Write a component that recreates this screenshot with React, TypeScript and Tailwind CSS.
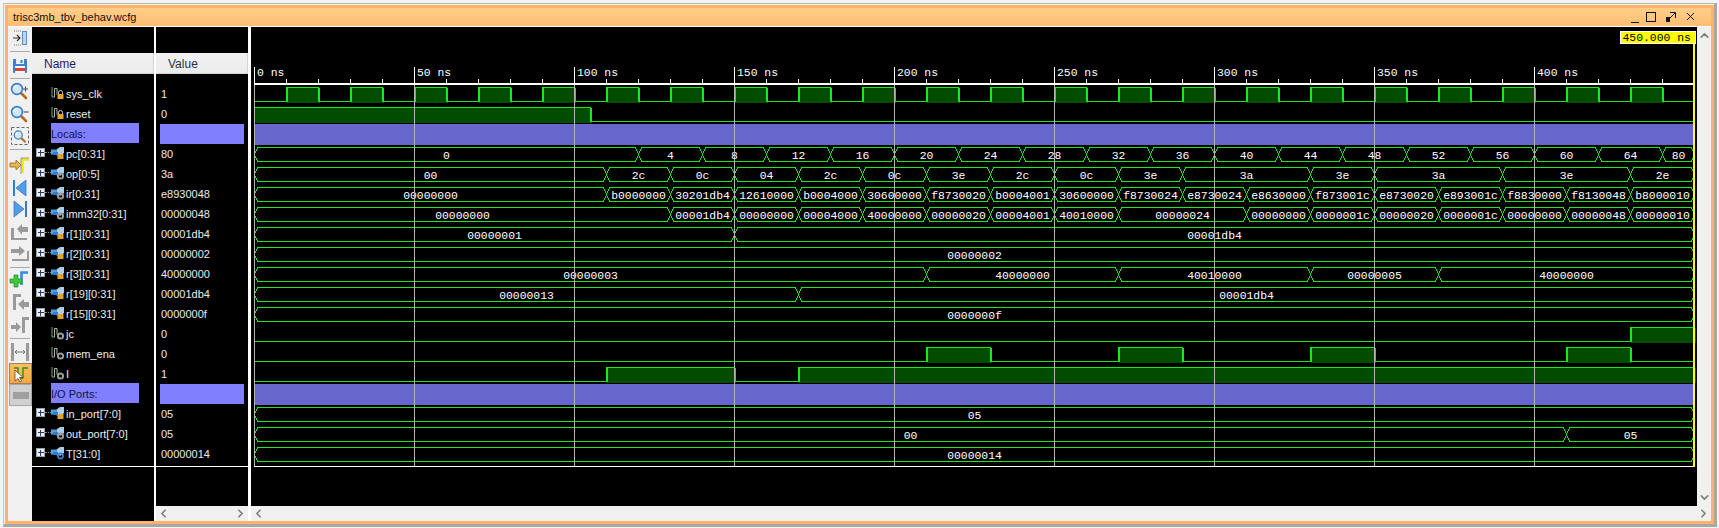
import React from "react";
import { ChevronLeft, ChevronRight, ChevronUp, ChevronDown } from "lucide-react";

const X = (t: number) => Math.floor(254.7 + 3.2 * t) + 0.5;
const G = "#1ce61c";
const DARK = "#004d00";
const MONO = '"Liberation Mono", monospace';

type Seg = [number, string];
const bus = (vals: Seg[]) => vals;

const pcs = [0,4,8,12,16,20,24,28,32,36,40,44,48,52,56,60,64];
const pcSegs: Seg[] = [[120,"0"],...pcs.slice(1).map((v,i):Seg=>[140+i*20,String(v)]),[450,"80"]];

const rowsW: Record<number, Seg[]> = {
  3: pcSegs,
  4: bus([[110,"00"],[130,"2c"],[150,"0c"],[170,"04"],[190,"2c"],[210,"0c"],[230,"3e"],[250,"2c"],[270,"0c"],[290,"3e"],[330,"3a"],[350,"3e"],[390,"3a"],[430,"3e"],[450,"2e"]]),
  5: bus([[110,"00000000"],[130,"b0000000"],[150,"30201db4"],[170,"12610000"],[190,"b0004000"],[210,"30600000"],[230,"f8730020"],[250,"b0004001"],[270,"30600000"],[290,"f8730024"],[310,"e8730024"],[330,"e8630000"],[350,"f873001c"],[370,"e8730020"],[390,"e893001c"],[410,"f8830000"],[430,"f8130048"],[450,"b8000010"]]),
  6: bus([[130,"00000000"],[150,"00001db4"],[170,"00000000"],[190,"00004000"],[210,"40000000"],[230,"00000020"],[250,"00004001"],[270,"40010000"],[310,"00000024"],[330,"00000000"],[350,"0000001c"],[370,"00000020"],[390,"0000001c"],[410,"00000000"],[430,"00000048"],[450,"00000010"]]),
  7: bus([[150,"00000001"],[450,"00001db4"]]),
  8: bus([[450,"00000002"]]),
  9: bus([[210,"00000003"],[270,"40000000"],[330,"40010000"],[370,"00000005"],[450,"40000000"]]),
  10: bus([[170,"00000013"],[450,"00001db4"]]),
  11: bus([[450,"0000000f"]]),
  16: bus([[450,"05"]]),
  17: bus([[410,"00"],[450,"05"]]),
  18: bus([[450,"00000014"]]),
};

const clockHighs: [number, number][] = Array.from({ length: 22 }, (_, i) => [10 + i * 20, 20 + i * 20] as [number, number]);
const digital: Record<number, [number, number][]> = {
  0: clockHighs,
  1: [[0, 105]],
  12: [[430, 450]],
  13: [[210, 230], [270, 290], [330, 350], [410, 430]],
  14: [[110, 150], [170, 450]],
};

function Digital({ k, highs }: { k: number; highs: [number, number][] }) {
  const top = 87.5 + 20 * k;
  const low = top + 14;
  const startHigh = highs[0][0] === 0;
  let d = `M${X(0)} ${startHigh ? top : low}`;
  highs.forEach(([a, b]) => {
    const xa = X(a);
    const xb = X(b);
    if (a !== 0) d += `L${xa} ${low}L${xa} ${top}`;
    d += `L${xb} ${top}`;
    if (b !== 450) d += `L${xb} ${low}`;
  });
  if (highs[highs.length - 1][1] !== 450) d += `L${X(450)} ${low}`;
  return (
    <g>
      {highs.map(([a, b], i) => (
        <rect key={i} x={X(a)} y={top} width={X(b) - X(a) + 1} height={15.5} fill={DARK} />
      ))}
      <path d={d} fill="none" stroke={G} strokeWidth={1} />
      {highs.flatMap(([a, b]) => [a, b]).filter((t) => t !== 0 && t !== 450).map((t) => (
        <rect key={t} x={X(t) - 0.5} y={top} width={2} height={14.5} fill={G} />
      ))}
    </g>
  );
}

function Bus({ k, segs }: { k: number; segs: Seg[] }) {
  const top = 147.5 + 20 * (k - 3);
  const bot = top + 14;
  const mid = top + 7;
  let start = 0;
  return (
    <g>
      {segs.map(([end, label], i) => {
        const a = X(start);
        const b = X(end);
        const cx = (a + b) / 2;
        start = end;
        const d = `M${a} ${mid}L${a + 3} ${top}L${b - 3} ${top}L${b} ${mid}L${b - 3} ${bot}L${a + 3} ${bot}Z`;
        return (
          <g key={i}>
            <path d={d} fill="none" stroke={G} strokeWidth={1} />
            <text x={cx} y={top + 11} textAnchor="middle" fill="#ffffff" fontSize={11.4} fontFamily={MONO} shapeRendering="auto">
              {label}
            </text>
          </g>
        );
      })}
    </g>
  );
}

function Waves() {
  const ticks = Array.from({ length: 45 }, (_, i) => i * 10);
  return (
    <svg width={1446} height={440} viewBox="251 27 1446 440" shapeRendering="crispEdges" className="block">
      {[2, 15].map((k) => (
        <rect key={k} x={255} y={84 + 20 * k} width={1439} height={21} fill="#6666cc" />
      ))}
      {Object.entries(digital).map(([k, v]) => (
        <Digital key={k} k={Number(k)} highs={v} />
      ))}
      {Object.entries(rowsW).map(([k, v]) => (
        <Bus key={k} k={Number(k)} segs={v} />
      ))}
      <rect x={254} y={83} width={1440} height={1.5} fill="#ffffff" />
      {ticks.map((t) => {
        const major = t % 50 === 0;
        return <rect key={t} x={X(t) - 0.5} y={major ? 67 : 79} width={1} height={major ? 16 : 4} fill="#ffffff" />;
      })}
      {ticks.filter((t) => t % 50 === 0).map((t) => (
        <text key={t} x={X(t) + 2.5} y={76} fill="#ffffff" fontSize={11.4} fontFamily={MONO} shapeRendering="auto">
          {t} ns
        </text>
      ))}
      {ticks.filter((t) => t % 50 === 0).map((t) => (
        <rect key={t} x={X(t) - 0.5} y={85} width={1} height={381} fill="#b4b4b4" />
      ))}
      <rect x={254} y={466} width={1441} height={1} fill="#ffffff" />
      <rect x={1693} y={43} width={2} height={424} fill="#ffff00" />
      <rect x={1620} y={31} width={75} height={12} fill="#ffff00" stroke="#ffffff" strokeWidth={1} />
      <text x={1622.5} y={40.5} fill="#000000" fontSize={11.4} fontFamily={MONO} shapeRendering="auto">
        450.000 ns
      </text>
    </svg>
  );
}

type RowDef =
  | { name: string; value: string; type: "scalar" | "bus"; badge: "lock" | "gear" | "ring" }
  | { name: string; divider: true };

const rows: RowDef[] = [
  { name: "sys_clk", value: "1", type: "scalar", badge: "lock" },
  { name: "reset", value: "0", type: "scalar", badge: "lock" },
  { name: "Locals:", divider: true },
  { name: "pc[0:31]", value: "80", type: "bus", badge: "lock" },
  { name: "op[0:5]", value: "3a", type: "bus", badge: "gear" },
  { name: "ir[0:31]", value: "e8930048", type: "bus", badge: "gear" },
  { name: "imm32[0:31]", value: "00000048", type: "bus", badge: "gear" },
  { name: "r[1][0:31]", value: "00001db4", type: "bus", badge: "lock" },
  { name: "r[2][0:31]", value: "00000002", type: "bus", badge: "lock" },
  { name: "r[3][0:31]", value: "40000000", type: "bus", badge: "lock" },
  { name: "r[19][0:31]", value: "00001db4", type: "bus", badge: "lock" },
  { name: "r[15][0:31]", value: "0000000f", type: "bus", badge: "lock" },
  { name: "jc", value: "0", type: "scalar", badge: "gear" },
  { name: "mem_ena", value: "0", type: "scalar", badge: "gear" },
  { name: "I", value: "1", type: "scalar", badge: "gear" },
  { name: "I/O Ports:", divider: true },
  { name: "in_port[7:0]", value: "05", type: "bus", badge: "lock" },
  { name: "out_port[7:0]", value: "05", type: "bus", badge: "gear" },
  { name: "T[31:0]", value: "00000014", type: "bus", badge: "ring" },
];

function SigIcon({ type, badge }: { type: "scalar" | "bus"; badge: "lock" | "gear" | "ring" }) {
  return (
    <svg width={14} height={14} viewBox="0 0 14 14" className="shrink-0">
      {type === "scalar" ? (
        <g fill="none" strokeWidth={1}>
          <path d="M1 1v10h2.5" stroke="#7fa87f" />
          <path d="M3.5 11V2.5H6v6" stroke="#a8b8a8" />
        </g>
      ) : (
        <g>
          <path d="M0 3.5h5.5v5H0z" fill="#4f9fe0" />
          <path d="M5.5 3.5L9 1h4v6l-3 2.5H5.5z" fill="#a8cdea" />
          <rect x={2} y={6} width={5} height={3} fill="#2f7fc8" />
        </g>
      )}
      {badge === "lock" && (
        <g>
          <path d="M7.5 8V6.5a2 2 0 0 1 4 0V8" fill="none" stroke="#cfcfcf" strokeWidth={1} />
          <rect x={6.5} y={8} width={6} height={5} fill="#e0a52a" />
        </g>
      )}
      {badge === "gear" && <circle cx={9.5} cy={10} r={2.6} fill="none" stroke="#9a9a9a" strokeWidth={2} />}
      {badge === "ring" && <circle cx={9.5} cy={10} r={2.6} fill="none" stroke="#3f7fd0" strokeWidth={1.6} />}
    </svg>
  );
}

function NameRow({ row }: { row: RowDef }) {
  if ("divider" in row) {
    return (
      <div className="h-[20px] pl-[19px]">
        <div className="flex h-[20px] w-[88px] items-center bg-[#8080ff] text-[#10104a]">
          <span className="mt-[2px]">{row.name}</span>
        </div>
      </div>
    );
  }
  return (
    <div className="relative flex h-[20px] items-center pl-[19px]">
      {row.type === "bus" && (
        <>
          <div className="absolute left-[4px] top-[5px] flex h-[9px] w-[9px] items-center justify-center border border-[#a0a0a0] bg-[#f0f0f0]">
            <svg width={7} height={7} viewBox="0 0 7 7" shapeRendering="crispEdges">
              <path d="M0.5 3.5h6M3.5 0.5v6" stroke="#1c3a8a" strokeWidth={1} />
            </svg>
          </div>
          <div className="absolute left-[13px] top-[9px] w-[6px] border-t border-dotted border-[#909090]" />
        </>
      )}
      <SigIcon type={row.type} badge={row.badge} />
      <span className="ml-[1px] mt-[2px] whitespace-nowrap text-[#ececec]">{row.name}</span>
    </div>
  );
}

function ValueRow({ row }: { row: RowDef }) {
  if ("divider" in row) {
    return (
      <div className="h-[20px] pl-[4px] pt-[1px]">
        <div className="h-[20px] w-[84px] bg-[#8080ff]" />
      </div>
    );
  }
  return (
    <div className="flex h-[20px] items-center pl-[5px] text-[#ececec]">
      <span className="mt-[2px]">{row.value}</span>
    </div>
  );
}

const Sep = ({ cls }: { cls: string }) => <div className={`h-[1px] w-[20px] shrink-0 bg-[#a8a8a8] ${cls}`} />;

const Ic = ({ cls, children }: { cls: string; children: React.ReactNode }) => (
  <svg width={24} height={20} viewBox="0 0 24 20" className={`block shrink-0 ${cls}`}>
    {children}
  </svg>
);

const Mag = ({ sign }: { sign?: "+" | "-" }) => (
  <g>
    <path d="M13 12l5 5" stroke="#b8691c" strokeWidth={2.6} strokeLinecap="round" />
    <circle cx={9} cy={8} r={5.4} fill="#cfe6fb" stroke="#3f7fc0" strokeWidth={1.6} />
    <path d="M6 8a3 3 0 0 1 3-3" fill="none" stroke="#ffffff" strokeWidth={1.2} />
    {sign === "+" && <path d="M15 8h5M17.5 5.5v5" stroke="#555" strokeWidth={1.2} />}
    {sign === "-" && <path d="M15.5 8h5" stroke="#555" strokeWidth={1.2} />}
  </g>
);

const GrayFill = "#9a9a9a";

function Toolbar() {
  return (
    <div className="flex h-full w-[24px] shrink-0 flex-col items-center bg-[#f0f0f0]">
      <Ic cls="mt-[1px]">
        <path d="M6 3h8M6 17h8" stroke="#777" strokeWidth={1} strokeDasharray="1 1" />
        <path d="M5 10h7M9 7l3 3-3 3" fill="none" stroke="#333" strokeWidth={1.2} />
        <rect x={14.5} y={3.5} width={4} height={13} fill="#b8d6f2" stroke="#5b8fc4" />
      </Ic>
      <Sep cls="mt-[3px]" />
      <Ic cls="mt-[4px]">
        <rect x={5} y={3} width={14} height={14} rx={1} fill="#3f7fd0" />
        <rect x={8} y={3} width={8} height={5} fill="#e8f0fa" />
        <rect x={12.5} y={4} width={2} height={3} fill="#3f7fd0" />
        <rect x={7} y={10} width={10} height={7} fill="#f4f4f4" />
        <rect x={7} y={12} width={10} height={3} fill="#d8403a" />
      </Ic>
      <Sep cls="mt-[2px]" />
      <Ic cls="mt-[2px]"><Mag sign="+" /></Ic>
      <Ic cls="mt-[3px]"><Mag sign="-" /></Ic>
      <Ic cls="mt-[2px]">
        <rect x={3.5} y={1.5} width={17} height={17} fill="none" stroke="#666" strokeDasharray="3 2" />
        <g transform="translate(3.5 3) scale(0.75)"><Mag /></g>
      </Ic>
      <Sep cls="mt-[3px]" />
      <Ic cls="mt-[6px]">
        <path d="M2 7h6V4l5 5-5 5v-3H2z" fill="#e8b84a" stroke="#8a6a20" strokeWidth={0.8} />
        <path d="M14.5 17V3.5H21" fill="none" stroke="#f4e400" strokeWidth={2.4} />
        <path d="M13 18V2h8" fill="none" stroke="#777" strokeWidth={0.7} />
      </Ic>
      <Ic cls="mt-[2px]">
        <rect x={5} y={2} width={2} height={16} fill="#2f7fd0" />
        <path d="M8 10l10-8v16z" fill="#4f9fe6" stroke="#2f6fb8" strokeWidth={0.7} />
      </Ic>
      <Ic cls="mt-[1px]">
        <rect x={17} y={2} width={2} height={16} fill="#2f7fd0" />
        <path d="M16 10L6 2v16z" fill="#4f9fe6" stroke="#2f6fb8" strokeWidth={0.7} />
      </Ic>
      <Ic cls="mt-[3px]">
        <path d="M3 6h3v10h13v2H3z" fill={GrayFill} />
        <path d="M9 7l5-5v3h6v5h-6v3z" fill={GrayFill} />
      </Ic>
      <Ic cls="mt-[1px]">
        <path d="M3 6h8V3l6 5-6 5v-3H3z" fill={GrayFill} />
        <path d="M19 8h2v10H4v-2h15z" fill={GrayFill} />
      </Ic>
      <Sep cls="mt-[4px]" />
      <Ic cls="mt-[1px]">
        <path d="M13.5 16V3.5H20" fill="none" stroke="#2f8fe0" strokeWidth={2.6} />
        <path d="M6 6h4v4h4v4h-4v4H6v-4H2v-4h4z" fill="#3cc83c" stroke="#1f8a1f" strokeWidth={0.7} />
      </Ic>
      <Ic cls="mt-[3px]">
        <path d="M5 2h8v3H8v13H5z" fill={GrayFill} />
        <path d="M10 12l6-5v3h5v5h-5v3z" fill={GrayFill} />
      </Ic>
      <Ic cls="mt-[3px]">
        <path d="M14 2h7v3h-4v13h-3z" fill={GrayFill} />
        <path d="M3 10h5V7l5 5-5 5v-3H3z" fill={GrayFill} />
      </Ic>
      <Sep cls="mt-[3px]" />
      <Ic cls="mt-[3px]">
        <rect x={3} y={1} width={3} height={18} fill={GrayFill} />
        <rect x={18} y={1} width={3} height={18} fill={GrayFill} />
        <path d="M7 10h10M9 8l-2 2 2 2M15 8l2 2-2 2" fill="none" stroke="#777" strokeWidth={1} />
      </Ic>
      <div className="mt-[1px] ml-[1px] flex h-[21px] w-[23px] shrink-0 items-center justify-center border border-[#a08060] bg-gradient-to-b from-[#ffc05e] to-[#ffa63e]">
        <svg width={20} height={18} viewBox="0 0 20 18">
          <path d="M3 3h4v10h5V3h5" fill="none" stroke="#2e8a2e" strokeWidth={1.4} />
          <path d="M4 5v11l3-2.5 2 3.5 1.5-1-2-3.5h3.5z" fill="#ffffff" stroke="#333" strokeWidth={0.7} />
        </svg>
      </div>
      <div className="ml-[1px] flex h-[22px] w-[23px] shrink-0 items-center justify-center border border-[#a8a8a8] bg-[#d0d0d0]">
        <div className="h-[7px] w-[16px] bg-[#a0a0a0]" />
      </div>
    </div>
  );
}

function Header({ label, cls }: { label: string; cls: string }) {
  return (
    <div className={`flex h-[21px] items-center border-b border-r border-[#d4d4d4] bg-gradient-to-b from-[#f2f2f2] to-[#ebebeb] pt-[2px] text-[12px] ${cls}`}>
      {label}
    </div>
  );
}

export default function App() {
  return (
    <div
      className="h-[528px] w-[1719px] overflow-hidden bg-[#f4f4f4] pl-[3px] pt-[3px] text-[11px]"
      style={{ fontFamily: '"Liberation Sans", sans-serif' }}
    >
      <div className="h-[524px] w-[1714px] border-b-[3px] border-l border-r-[3px] border-t border-b-[#a8a8a8] border-l-[#c4c4c4] border-r-[#a8a8a8] border-t-[#b8b8b8] pl-[1px] pt-[1px]">
        <div className="flex h-[519px] w-[1709px] flex-col border-[3px] border-[#ffb366]">
          <div className="flex h-[18px] shrink-0 items-center justify-between bg-gradient-to-b from-[#ffcf88] to-[#ffbd73] pl-[5px] text-[#111]">
            <span>trisc3mb_tbv_behav.wcfg</span>
            <div className="mr-[12px] flex items-center">
              <svg width={70} height={14} viewBox="0 0 70 14" fill="none" stroke="#111" shapeRendering="crispEdges">
                <path d="M2 12.5h8" strokeWidth={1} />
                <rect x={17.5} y={2.5} width={9} height={9} strokeWidth={1} />
                <path d="M38 11l8-8M41 2.5h5.5V8" strokeWidth={1} shapeRendering="auto" />
                <rect x={37} y={7} width={4} height={5} fill="#111" stroke="none" />
                <path d="M58 3l7 7M65 3l-7 7" strokeWidth={1} shapeRendering="auto" />
              </svg>
            </div>
          </div>
          <div className="h-[1px] shrink-0 bg-white" />

          <div className="flex h-[494px] shrink-0">
            <Toolbar />

            <div className="flex w-[122px] shrink-0 flex-col bg-black">
              <div className="h-[26px]" />
              <Header label="Name" cls="pl-[12px] text-[#1c1c5c]" />
              <div className="h-[9px]" />
              {rows.map((r) => (
                <NameRow key={r.name} row={r} />
              ))}
              <div className="h-[3px]" />
              <div className="h-[1px] bg-white" />
            </div>
            <div className="w-[2px] shrink-0 bg-white" />

            <div className="flex min-w-0 flex-1 flex-col">
              <div className="flex h-[479px] shrink-0">
                <div className="flex w-[92px] shrink-0 flex-col bg-black">
                  <div className="h-[26px]" />
                  <Header label="Value" cls="pl-[12px] text-[#303040]" />
                  <div className="h-[9px]" />
                  {rows.map((r) => (
                    <ValueRow key={r.name} row={r} />
                  ))}
                  <div className="h-[3px]" />
                  <div className="h-[1px] bg-white" />
                </div>
                <div className="w-[3px] shrink-0 bg-white" />
                <div className="w-[1446px] shrink-0 bg-black">
                  <Waves />
                </div>
                <div className="flex flex-1 flex-col items-center justify-between bg-[#f0f0f0] py-[2px] text-[#808080]">
                  <ChevronUp size={13} strokeWidth={3.2} />
                  <ChevronDown size={13} strokeWidth={3.2} />
                </div>
              </div>
              <div className="flex h-[15px] shrink-0 items-center">
                <div className="flex h-full w-[92px] shrink-0 items-center justify-between bg-[#f0f0f0] px-[1px] text-[#808080]">
                  <ChevronLeft size={13} strokeWidth={3.2} />
                  <ChevronRight size={13} strokeWidth={3.2} />
                </div>
                <div className="h-full w-[3px] shrink-0 bg-white" />
                <div className="flex h-full flex-1 items-center justify-between bg-[#f0f0f0] pl-[1px] pr-[1px] text-[#808080]">
                  <ChevronLeft size={13} strokeWidth={3.2} />
                  <ChevronRight size={13} strokeWidth={3.2} />
                </div>
              </div>
            </div>
          </div>
        </div>
      </div>
    </div>
  );
}
